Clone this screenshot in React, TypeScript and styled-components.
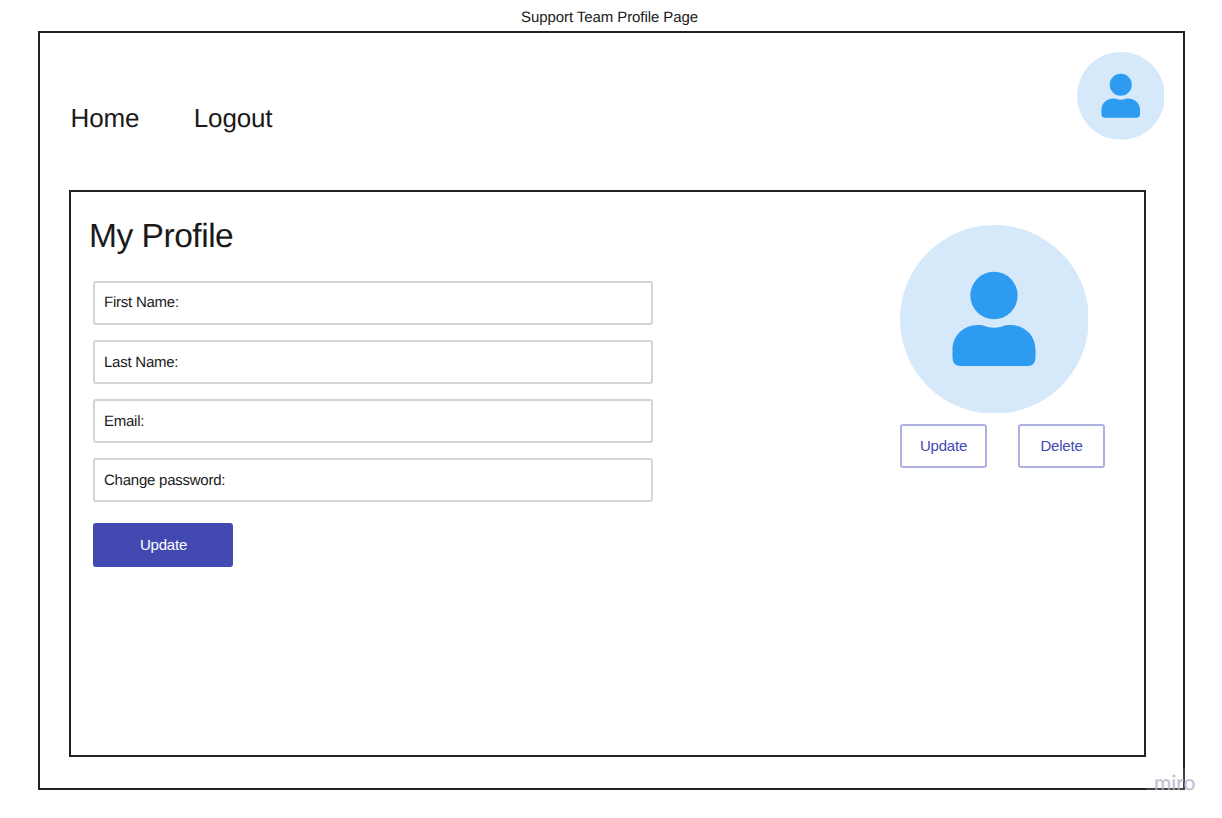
import React from "react";
import styled, { createGlobalStyle } from "styled-components";

const GlobalStyle = createGlobalStyle`
  * { box-sizing: border-box; }
  body {
    margin: 0;
    background: #fff;
    color: #1a1a1a;
    font-family: "Liberation Sans", Arial, sans-serif;
    text-rendering: geometricPrecision;
  }
`;

const Page = styled.div`
  position: relative;
  width: 1222px;
  height: 818px;
  padding: 0 37px 0 38px;
  overflow: hidden;
`;

const PageTitle = styled.div`
  height: 31px;
  padding: 9px 4px 0 0;
  text-align: center;
  font-size: 15px;
  letter-spacing: -0.08px;
  line-height: 18px;
`;

const Frame = styled.div`
  width: 1147px;
  height: 758.5px;
  border: 2px solid #222;
  padding: 19px 19px 0 29px;
`;

const Header = styled.header`
  display: flex;
  justify-content: space-between;
  height: 137.5px;
`;

const Nav = styled.nav`
  display: flex;
  gap: 54.5px;
  padding: 51px 0 0 1.5px;
`;

const NavItem = styled.a`
  font-size: 26px;
  letter-spacing: -0.15px;
  line-height: 30px;
`;

const Panel = styled.main`
  display: flex;
  justify-content: space-between;
  width: 1077px;
  height: 567.5px;
  border: 2px solid #222;
  padding: 25px 39px 0 18px;
`;

const Heading = styled.h1`
  margin: 0 0 25.6px;
  font-size: 33.6px;
  font-weight: 400;
  letter-spacing: -0.5px;
  line-height: 39px;
`;

const Form = styled.form`
  display: flex;
  flex-direction: column;
  gap: 15.4px;
  width: 560px;
  margin-left: 4px;
`;

const Field = styled.label`
  display: flex;
  align-items: center;
  height: 43.7px;
  padding: 0 9px;
  border: 2px solid #d4d4d4;
  border-radius: 3px;
  font-size: 15px;
  letter-spacing: -0.24px;
`;

const Button = styled.button<{ $primary?: boolean }>`
  width: ${(p) => (p.$primary ? "140px" : "87px")};
  height: ${(p) => (p.$primary ? "44px" : "43.5px")};
  margin-top: ${(p) => (p.$primary ? "5.5px" : "0")};
  padding: ${(p) => (p.$primary ? "0 0 0 1px" : "0")};
  border: ${(p) => (p.$primary ? "0" : "2px solid #adb0e0")};
  border-radius: 3px;
  background: ${(p) => (p.$primary ? "#424ab2" : "#fff")};
  color: ${(p) => (p.$primary ? "#fff" : "#424ab2")};
  font-family: inherit;
  font-size: 15px;
  letter-spacing: -0.2px;
`;

const Picture = styled.section`
  width: 205px;
  padding-top: 8.6px;
`;

const Actions = styled.div`
  display: flex;
  justify-content: space-between;
  margin-top: 11px;
`;

const AvatarSvg = styled.svg`
  display: block;
  flex: none;
`;

const Watermark = styled.div`
  position: absolute;
  left: 1146px;
  top: 768px;
  width: 52px;
  height: 28px;
  padding-left: 8px;
  background: rgba(255, 255, 255, 0.15);
  color: rgba(176, 176, 198, 0.75);
  font-family: Lato, sans-serif;
  font-size: 21px;
  line-height: 29px;
  -webkit-text-stroke: 0.3px rgba(176, 176, 198, 0.75);
`;

const Avatar = ({ size }: { size: number }) => (
  <AvatarSvg width={size} height={size} viewBox="0 0 188 188">
    <circle cx="94.4" cy="94.4" r="94.4" fill="#d5e9fa" />
    <circle cx="94" cy="70.5" r="23.7" fill="#2d9bf0" />
    <path
      d="M78 100C80 99.8 82 100 84.500 101C90.500 103.300 97.500 103.300 103.500 101C106 100 108 99.800 110 100C125 100 135.500 111 135.500 125V132.500Q135.500 141 127.500 141H60.500Q52.500 141 52.500 132.500V125C52.500 111 63 100 78 100Z"
      fill="#2d9bf0"
    />
  </AvatarSvg>
);

const fields = ["First Name:", "Last Name:", "Email:", "Change password:"];

export default function App() {
  return (
    <>
      <GlobalStyle />
      <Page>
        <PageTitle>Support Team Profile Page</PageTitle>
        <Frame>
          <Header>
            <Nav>
              <NavItem>Home</NavItem>
              <NavItem>Logout</NavItem>
            </Nav>
            <Avatar size={87.5} />
          </Header>
          <Panel>
            <div>
              <Heading>My Profile</Heading>
              <Form>
                {fields.map((name) => (
                  <Field key={name}>{name}</Field>
                ))}
                <Button type="button" $primary>
                  Update
                </Button>
              </Form>
            </div>
            <Picture>
              <Avatar size={188} />
              <Actions>
                <Button type="button">Update</Button>
                <Button type="button">Delete</Button>
              </Actions>
            </Picture>
          </Panel>
        </Frame>
        <Watermark>miro</Watermark>
      </Page>
    </>
  );
}
